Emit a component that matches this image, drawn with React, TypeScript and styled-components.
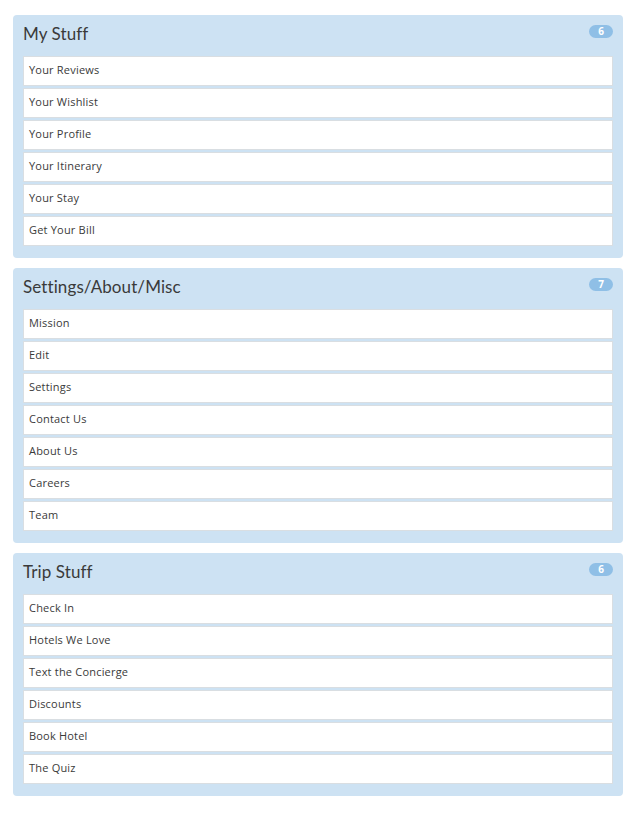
import React, { FC } from "react";
import styled, { createGlobalStyle } from "styled-components";

const GlobalStyle = createGlobalStyle`
  body {
    margin: 0;
    background: #fff;
    font-family: Lato, "Open Sans", "Liberation Sans", sans-serif;
  }
`;

const Page = styled.div`
  display: flex;
  flex-direction: column;
  gap: 10px;
  padding: 15px 15px 20px 13px;
`;

const Panel = styled.section`
  background: #cde2f3;
  border-radius: 4px;
  padding: 0 10px 12px;
`;

const PanelHeader = styled.header`
  height: 41px;
  display: flex;
  align-items: center;
  justify-content: space-between;
  padding-bottom: 5px;
  box-sizing: border-box;
`;

const Title = styled.h2`
  margin: 0;
  font-size: 17px;
  font-weight: 400;
  color: #3a3a3a;
  letter-spacing: 0.1px;
`;

const Badge = styled.span`
  min-width: 24px;
  height: 13px;
  border-radius: 7px;
  background: #8fbfe6;
  color: #fff;
  font-family: "Open Sans", sans-serif;
  font-size: 10px;
  font-weight: 700;
  line-height: 13px;
  text-align: center;
  margin-top: -4px;
`;

const List = styled.ul`
  list-style: none;
  margin: 0;
  padding: 0;
  display: flex;
  flex-direction: column;
  gap: 2px;
`;

const Item = styled.li`
  height: 30px;
  box-sizing: border-box;
  background: #fff;
  border: 1px solid #d9dee2;
  padding: 0 5px 3px;
  display: flex;
  align-items: center;
  font-family: "Open Sans", Lato, sans-serif;
  font-size: 11px;
  letter-spacing: 0.2px;
  color: #3a3a3a;
`;

interface GroupProps {
  title: string;
  items: string[];
}

const Group: FC<GroupProps> = ({ title, items }) => (
  <Panel>
    <PanelHeader>
      <Title>{title}</Title>
      <Badge>{items.length}</Badge>
    </PanelHeader>
    <List>
      {items.map((item) => (
        <Item key={item}>{item}</Item>
      ))}
    </List>
  </Panel>
);

const groups: GroupProps[] = [
  {
    title: "My Stuff",
    items: [
      "Your Reviews",
      "Your Wishlist",
      "Your Profile",
      "Your Itinerary",
      "Your Stay",
      "Get Your Bill",
    ],
  },
  {
    title: "Settings/About/Misc",
    items: ["Mission", "Edit", "Settings", "Contact Us", "About Us", "Careers", "Team"],
  },
  {
    title: "Trip Stuff",
    items: [
      "Check In",
      "Hotels We Love",
      "Text the Concierge",
      "Discounts",
      "Book Hotel",
      "The Quiz",
    ],
  },
];

const App: FC = () => (
  <>
    <GlobalStyle />
    <Page>
      {groups.map((g) => (
        <Group key={g.title} {...g} />
      ))}
    </Page>
  </>
);

export default App;
